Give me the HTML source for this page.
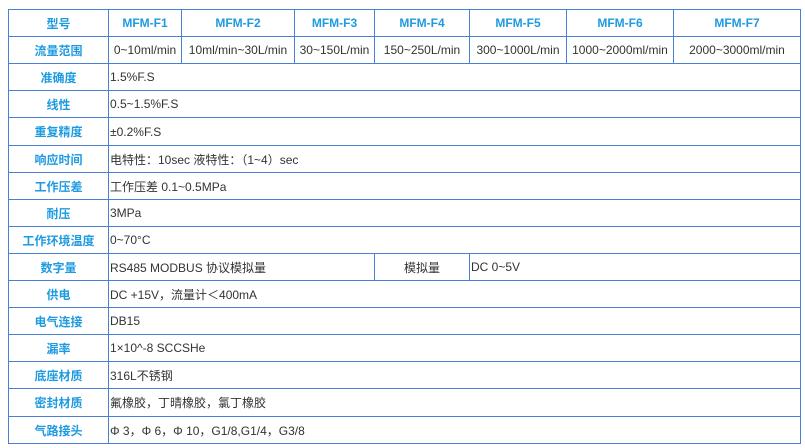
<!DOCTYPE html>
<html><head><meta charset="utf-8"><style>
body{margin:0;width:805px;height:448px;background:#fff;position:relative;overflow:hidden;font-family:"Liberation Sans","Noto Sans CJK SC",sans-serif;font-size:12px;color:#333}
.c{position:absolute;box-sizing:border-box;border:1px solid #4a7fd4;margin:0;display:flex;align-items:center;white-space:nowrap;background:#fff}
.l{justify-content:center;color:#1e9be0;font-weight:bold}
.m{justify-content:center}
.v{padding-left:1px}
</style></head><body>
<div id="t"></div>
<script>
var X=[8,108,181,294,374,469,566,673,800];
var rows=[
 ["型号",["MFM-F1","MFM-F2","MFM-F3","MFM-F4","MFM-F5","MFM-F6","MFM-F7"],"h"],
 ["流量范围",["0~10ml/min","10ml/min~30L/min","30~150L/min","150~250L/min","300~1000L/min","1000~2000ml/min","2000~3000ml/min"],"r"],
 ["准确度","1.5%F.S"],["线性","0.5~1.5%F.S"],["重复精度","±0.2%F.S"],
 ["响应时间","电特性：10sec 液特性：（1~4）sec"],["工作压差","工作压差 0.1~0.5MPa"],["耐压","3MPa"],
 ["工作环境温度","0~70°C"],["数字量","d"],["供电","DC +15V，流量计＜400mA"],["电气连接","DB15"],
 ["漏率","1×10^-8 SCCSHe"],["底座材质","316L不锈钢"],["密封材质","氟橡胶，丁晴橡胶，氯丁橡胶"],["气路接头","Φ 3，Φ 6，Φ 10，G1/8,G1/4，G3/8"]];
var h="",y=9,H=27.1;
function cell(x1,x2,y1,y2,cls,t){return '<div class="c '+cls+'" style="left:'+x1+'px;width:'+(x2-x1+1)+'px;top:'+Math.round(y1)+'px;height:'+(Math.round(y2)-Math.round(y1)+1)+'px">'+t+'</div>';}
rows.forEach(function(r,i){var y1=9+i*H,y2=9+(i+1)*H;
 h+=cell(X[0],X[1],y1,y2,"l",r[0]);
 if(Array.isArray(r[1])){r[1].forEach(function(t,j){h+=cell(X[j+1],X[j+2],y1,y2,r[2]=="h"?"l":"m",t);});}
 else if(r[1]=="d"){h+=cell(X[1],X[4],y1,y2,"v","RS485 MODBUS 协议模拟量");h+=cell(X[4],X[5],y1,y2,"m","模拟量");h+=cell(X[5],X[8],y1,y2,"v","DC 0~5V");}
 else h+=cell(X[1],X[8],y1,y2,"v",r[1]);});
document.getElementById("t").innerHTML=h;
</script>
</body></html>
